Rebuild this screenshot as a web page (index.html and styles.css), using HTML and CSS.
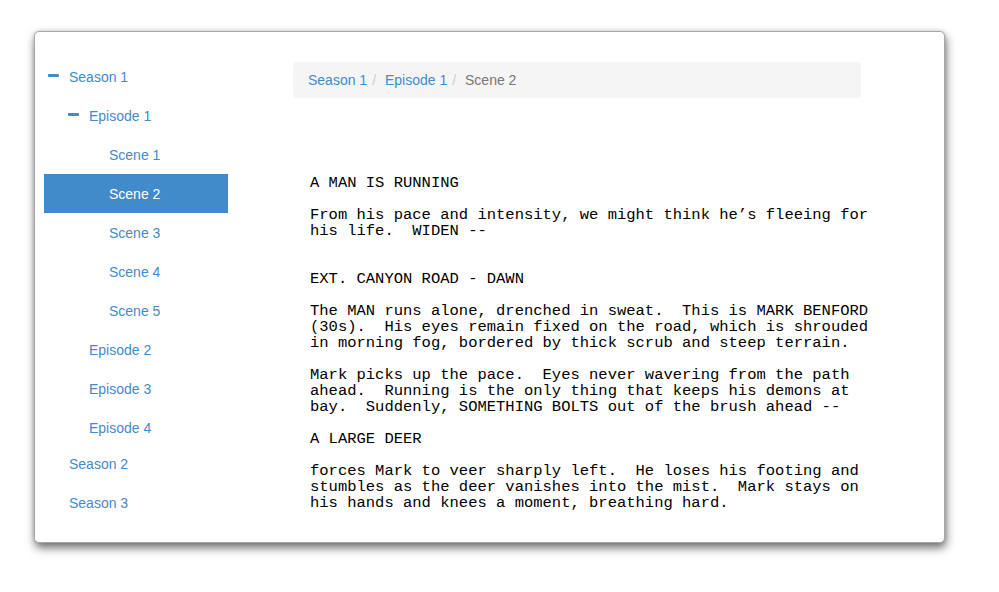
FILE: index.html
```html
<!DOCTYPE html>
<html>
<head>
<meta charset="utf-8">
<link rel="stylesheet" href="styles.css">
</head>
<body>
<div class="card">
  <nav class="tree">
    <a class="row lvl0"><span class="toggle"><span class="minus"></span></span><span>Season 1</span></a>
    <a class="row lvl1"><span class="toggle"><span class="minus"></span></span><span>Episode 1</span></a>
    <a class="row lvl2"><span class="toggle"></span><span>Scene 1</span></a>
    <a class="row lvl2 active"><span class="toggle"></span><span>Scene 2</span></a>
    <a class="row lvl2"><span class="toggle"></span><span>Scene 3</span></a>
    <a class="row lvl2"><span class="toggle"></span><span>Scene 4</span></a>
    <a class="row lvl2"><span class="toggle"></span><span>Scene 5</span></a>
    <a class="row lvl1"><span class="toggle"></span><span>Episode 2</span></a>
    <a class="row lvl1"><span class="toggle"></span><span>Episode 3</span></a>
    <a class="row lvl1"><span class="toggle"></span><span>Episode 4</span></a>
    <a class="row lvl0 after-group"><span class="toggle"></span><span>Season 2</span></a>
    <a class="row lvl0"><span class="toggle"></span><span>Season 3</span></a>
  </nav>
  <main class="main">
    <ol class="breadcrumb">
      <li><a>Season 1</a></li>
      <li><a>Episode 1</a></li>
      <li class="current">Scene 2</li>
    </ol>
<pre class="script">A MAN IS RUNNING

From his pace and intensity, we might think he’s fleeing for
his life.  WIDEN --


EXT. CANYON ROAD - DAWN

The MAN runs alone, drenched in sweat.  This is MARK BENFORD
(30s).  His eyes remain fixed on the road, which is shrouded
in morning fog, bordered by thick scrub and steep terrain.

Mark picks up the pace.  Eyes never wavering from the path
ahead.  Running is the only thing that keeps his demons at
bay.  Suddenly, SOMETHING BOLTS out of the brush ahead --

A LARGE DEER

forces Mark to veer sharply left.  He loses his footing and
stumbles as the deer vanishes into the mist.  Mark stays on
his hands and knees a moment, breathing hard.</pre>
  </main>
</div>
</body>
</html>
```

FILE: styles.css
```css
html, body {
  margin: 0;
  padding: 0;
  background: #fff;
}
body {
  font-family: "Liberation Sans", Arial, sans-serif;
  font-size: 14px;
  line-height: 20px;
  color: #333;
  padding: 31px 0 0 34px;
  height: 592px;
  box-sizing: border-box;
}
.card {
  box-sizing: border-box;
  width: 911px;
  height: 512px;
  border: 1px solid #a8a8a8;
  border-radius: 5px;
  box-shadow: 1px 5px 10px 0 rgba(0, 0, 0, 0.55), 0 0 4px rgba(0, 0, 0, 0.15);
  background: #fff;
  display: flex;
  padding: 25px 0 0 9px;
}
.tree {
  width: 184px;
  display: flex;
  flex-direction: column;
  flex-shrink: 0;
}
.row {
  display: flex;
  align-items: center;
  height: 39px;
  color: #428bca;
  text-decoration: none;
  padding-left: 4px;
}
.row.lvl1 { padding-left: 24px; }
.row.lvl2 { padding-left: 44px; }
.row.after-group { margin-top: -3px; }
.row.active {
  background: #428bca;
  color: #fff;
}
.toggle {
  width: 12px;
  margin-right: 9px;
  display: flex;
  align-items: center;
}
.minus {
  display: block;
  width: 11px;
  height: 3px;
  background: #428bca;
  border-radius: 1px;
  margin-top: -2px;
}
.main {
  margin-left: 65px;
  padding-top: 5px;
  flex: 1;
}
.breadcrumb {
  list-style: none;
  margin: 0;
  width: 568px;
  box-sizing: border-box;
  padding: 8px 15px;
  background: #f5f5f5;
  border-radius: 4px;
  display: flex;
}
.breadcrumb li a {
  color: #428bca;
  text-decoration: none;
}
.breadcrumb li + li::before {
  content: "/\00a0";
  padding: 0 5px;
  color: #ccc;
}
.breadcrumb .current {
  color: #777;
}
.script {
  margin: 77px 0 0 17px;
  font-family: "Liberation Mono", "Courier New", monospace;
  font-size: 15.5px;
  line-height: 16px;
  color: #000;
  white-space: pre;
}
```
